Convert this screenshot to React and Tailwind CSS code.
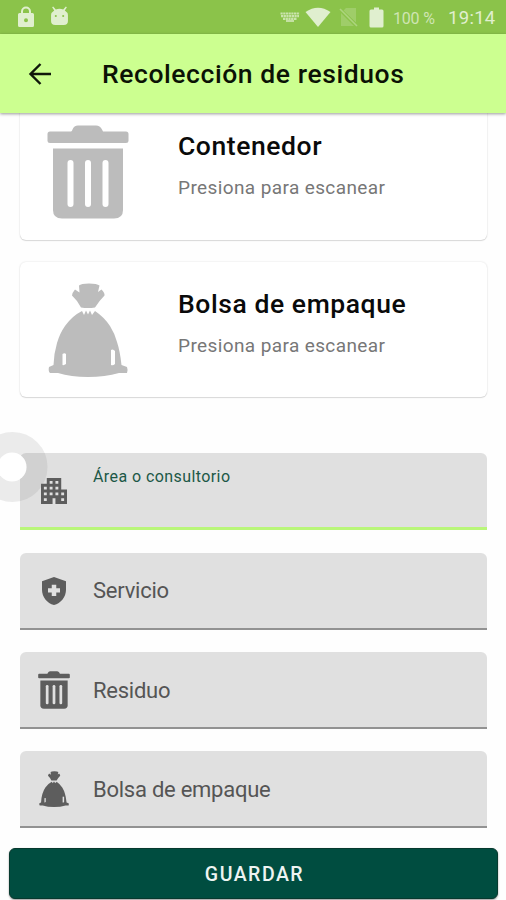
const Trash = ({ className, slots = 6 }) => (
  <svg className={className} viewBox="0 0 82 94" fill="currentColor" preserveAspectRatio="none">
    <path d="M3 6.500H24Q25 6.500 25.500 4.500Q27 .5 31 .5H49Q53 .5 55 4.500L56 6.500H79Q81.500 6.500 81.500 9V16Q81.500 18 79 18H3Q.5 18 .5 16V9Q.5 6.500 3 6.500Z" />
    <path d="M6 23.500H76V85Q76 93.500 67 93.500H15Q6 93.500 6 85Z" />
    {[23.500, 41, 58.500].map((x) => (
      <line key={x} x1={x} x2={x} y1="38" y2="79" stroke={slots === 6 ? '#fff' : '#e0e0e0'} strokeWidth={slots} strokeLinecap="round" />
    ))}
  </svg>
);

const Bag = ({ className, hole = '#fff' }) => (
  <svg className={className} viewBox="0 0 80 94" fill="currentColor" preserveAspectRatio="none">
    <path d="M31 2.500Q33 .5 41 .5Q49 .5 51.500 2.500L50 9L53.500 6.500Q57 10 56.500 12.500Q51 18 47 24.500Q40 25.500 33 24.500Q29 17 24 12.500Q24 10 27 6.500L31.500 9.500Z" />
    <path d="M34 28L36 32L38 27.500L40 31.500L42 27.500L44 32L47 28Q56 34 62 43Q67 51 69 59Q72 68 73.500 82L79 84Q80 86 79 90L71 90Q57 94 40 94Q23 94 10 90H2Q0 88 1 84L5.500 82Q6 70 9 60Q12 50 17 43Q24 33 34 28Z" />
    <path fill={hole} d="M14.500 71Q16.500 69.500 18 71V81Q16 82.500 14.500 82ZM63 67Q65 65.500 67 68V81Q65 83 63 82Z" />
  </svg>
);

function StatusBar() {
  return (
    <div className="flex h-[34px] shrink-0 items-center bg-[#8bc34a] pr-[10px] pl-[17px] text-[#e0efcf]">
      <svg className="h-[22px] w-[18px]" viewBox="0 0 18 22" fill="currentColor">
        <path fillRule="evenodd" d="M4 7V5.500a5 5 0 0 1 10 0V7h1.500q1.500 0 1.500 1.500v11q0 1.500-1.500 1.500h-13Q1 21 1 19.500v-11Q1 7 2.500 7ZM6 7h6V5.500a3 3 0 0 0-6 0ZM9 12.200a2 2 0 1 0 0 4 2 2 0 0 0 0-4Z" />
      </svg>
      <svg className="mb-[2px] ml-[15px] h-[20px] w-[19px]" viewBox="0 0 18 20" preserveAspectRatio="none" fill="currentColor">
        <path fillRule="evenodd" d="M3 .5L5.500 3.500Q9 2 12.500 3.500L15 .5L16 1.200L14 4.500Q17 6.500 17 9V15Q17 19 13 19H5Q1 19 1 15V9Q1 6.500 4 4.500L2 1.200ZM5.500 9a1 1 0 1 0 0 2 1 1 0 0 0 0-2ZM12.500 9a1 1 0 1 0 0 2 1 1 0 0 0 0-2Z" />
      </svg>
      <div className="flex-1" />
      <svg className="h-[12px] w-[20px] opacity-75" viewBox="0 0 20 12" fill="none" stroke="currentColor">
        <path strokeWidth="2.200" strokeDasharray="2.200 .5" d="M.5 2.500H19.500M1 5.200H19M3 7.900H17" />
        <path strokeWidth="1.800" d="M6 10H14" />
      </svg>
      <svg className="ml-[5px] h-[21px] w-[26px]" viewBox="0 0 26 21" fill="currentColor">
        <path d="M.5 5Q13-3.500 25.500 5L13 20Z" />
      </svg>
      <svg className="ml-[8px] h-[20px] w-[19px] opacity-40" viewBox="0 0 19 20">
        <path fill="currentColor" opacity=".6" d="M7 1H17V15.500L4.500 3.500ZM2 6L15 19H2Z" />
        <path stroke="currentColor" strokeWidth="1.600" d="M1 2L18 19" />
      </svg>
      <svg className="ml-[11px] h-[21px] w-[15px]" viewBox="0 0 15 21" fill="currentColor">
        <path d="M5 .5H10V2.500H13Q14.500 2.500 14.500 4V19Q14.500 20.500 13 20.500H2Q.5 20.500 .5 19V4Q.5 2.500 2 2.500H5Z" />
      </svg>
      <span className="mt-[3px] ml-[9px] w-[45px] text-[16px] tracking-[-0.200px] whitespace-nowrap text-[#cfe5b3]">100 %</span>
      <span className="mt-[4px] ml-[10px] w-[48px] text-[18.500px] tracking-[0.300px]">19:14</span>
    </div>
  );
}

const Card = ({ title, children }) => (
  <section className="flex h-[135px] shrink-0 rounded-[6px] bg-white pl-[27px] shadow-[0_0_2px_rgba(0,0,0,0.14),0_1px_1px_rgba(0,0,0,0.12)]">
    <div className="w-[131px] pt-[20px] text-[#bcbcbc]">{children}</div>
    <div className="pt-[25.300px]">
      <h2 className="text-[26.500px] leading-[32px] font-medium tracking-[0.570px] whitespace-nowrap text-[#0a0a0a]">{title}</h2>
      <p className="mt-[14px] text-[19px] leading-[24px] tracking-[0.390px] whitespace-nowrap text-[#777]">Presiona para escanear</p>
    </div>
  </section>
);

const Field = ({ label, icon, active }) => (
  <div className={`flex h-[77px] shrink-0 rounded-t-[6px] bg-[#e0e0e0] ${active ? 'border-b-[3px] border-[#b9f679]' : 'items-center border-b-2 border-[#929292]'}`}>
    <div className={`flex w-[68px] justify-center text-[#5d5d5d] ${active ? 'pt-[25px]' : 'pt-[1px]'}`}>{icon}</div>
    {active ? (
      <span className="pt-[13px] pl-[5px] text-[16px] leading-[22px] tracking-[0.420px] text-[#1c5847]">{label}</span>
    ) : (
      <span className="pt-[2px] pl-[5px] text-[22px] leading-[28px] tracking-[-0.250px] text-[#555]">{label}</span>
    )}
  </div>
);

const Building = () => (
  <svg className="h-[26px] w-[26px]" viewBox="3 3 18 18" fill="currentColor">
    <path d="M17 11V3H7v4H3v14h8v-4h2v4h8V11h-4zM7 19H5v-2h2v2zm0-4H5v-2h2v2zm0-4H5V9h2v2zm4 4H9v-2h2v2zm0-4H9V9h2v2zm0-4H9V5h2v2zm4 8h-2v-2h2v2zm0-4h-2V9h2v2zm0-4h-2V5h2v2zm4 12h-2v-2h2v2zm0-4h-2v-2h2v2z" />
  </svg>
);

const Shield = () => (
  <svg className="h-[28px] w-[24px]" viewBox="4 2 16 20" preserveAspectRatio="none" fill="currentColor">
    <path fillRule="evenodd" d="M10.500 13H8v-3h2.500V7.500h3V10H16v3h-2.500v2.500h-3V13zM12 2L4 5v6.090c0 5.050 3.410 9.760 8 10.910 4.590-1.150 8-5.860 8-10.910V5L12 2z" />
  </svg>
);

export default function App() {
  return (
    <div className="relative flex h-[900px] w-[506px] flex-col overflow-hidden bg-[#fefefe] font-['Roboto','Liberation_Sans',sans-serif]">
      <StatusBar />
      <header className="z-10 flex h-[79px] shrink-0 items-center bg-[#ccff90] pl-[28px] shadow-[0_1px_3px_rgba(0,0,0,0.4)]">
        <svg className="h-[22px] w-[24px]" viewBox="0 0 24 22" fill="none" stroke="#10180a" strokeWidth="2.400">
          <path d="M23 11H2.500M12.500 1L2.500 11L12.500 21" />
        </svg>
        <h1 className="ml-[50px] text-[26.500px] font-medium tracking-[0.570px] whitespace-nowrap text-[#0b1205]">Recolección de residuos</h1>
      </header>
      <main className="-mt-[8px] flex flex-col pr-[19px] pl-[20px]">
        <div className="flex flex-col gap-[22.300px]">
          <Card title="Contenedor"><Trash className="h-[94px] w-[82px]" /></Card>
          <Card title="Bolsa de empaque"><Bag className="mt-[0.500px] ml-[0.500px] h-[94px] w-[80px]" /></Card>
        </div>
        <div className="mt-[56.200px] flex flex-col gap-[22.300px]">
          <Field active label="Área o consultorio" icon={<Building />} />
          <Field label="Servicio" icon={<Shield />} />
          <Field label="Residuo" icon={<Trash slots={7} className="h-[38px] w-[32px]" />} />
          <Field label="Bolsa de empaque" icon={<Bag hole="#e0e0e0" className="h-[36px] w-[30px]" />} />
        </div>
      </main>
      <button className="mt-[20px] ml-[9px] h-[51px] w-[489px] shrink-0 rounded-[6px] border border-[#07392e] bg-[#004d40] pt-[2px] pl-[2px] text-[19.500px] font-medium tracking-[1.500px] text-[#eef4f2] shadow-[0_1px_2px_rgba(0,0,0,0.4)]">GUARDAR</button>
      <svg className="absolute top-[431px] left-0 h-[72px] w-[50px]" viewBox="0 0 50 72">
        <circle cx="12.500" cy="36" r="24.500" fill="none" stroke="#777" strokeOpacity=".14" strokeWidth="21" />
        <circle cx="12" cy="36" r="14.500" fill="#fff" fillOpacity=".95" />
      </svg>
    </div>
  );
}
